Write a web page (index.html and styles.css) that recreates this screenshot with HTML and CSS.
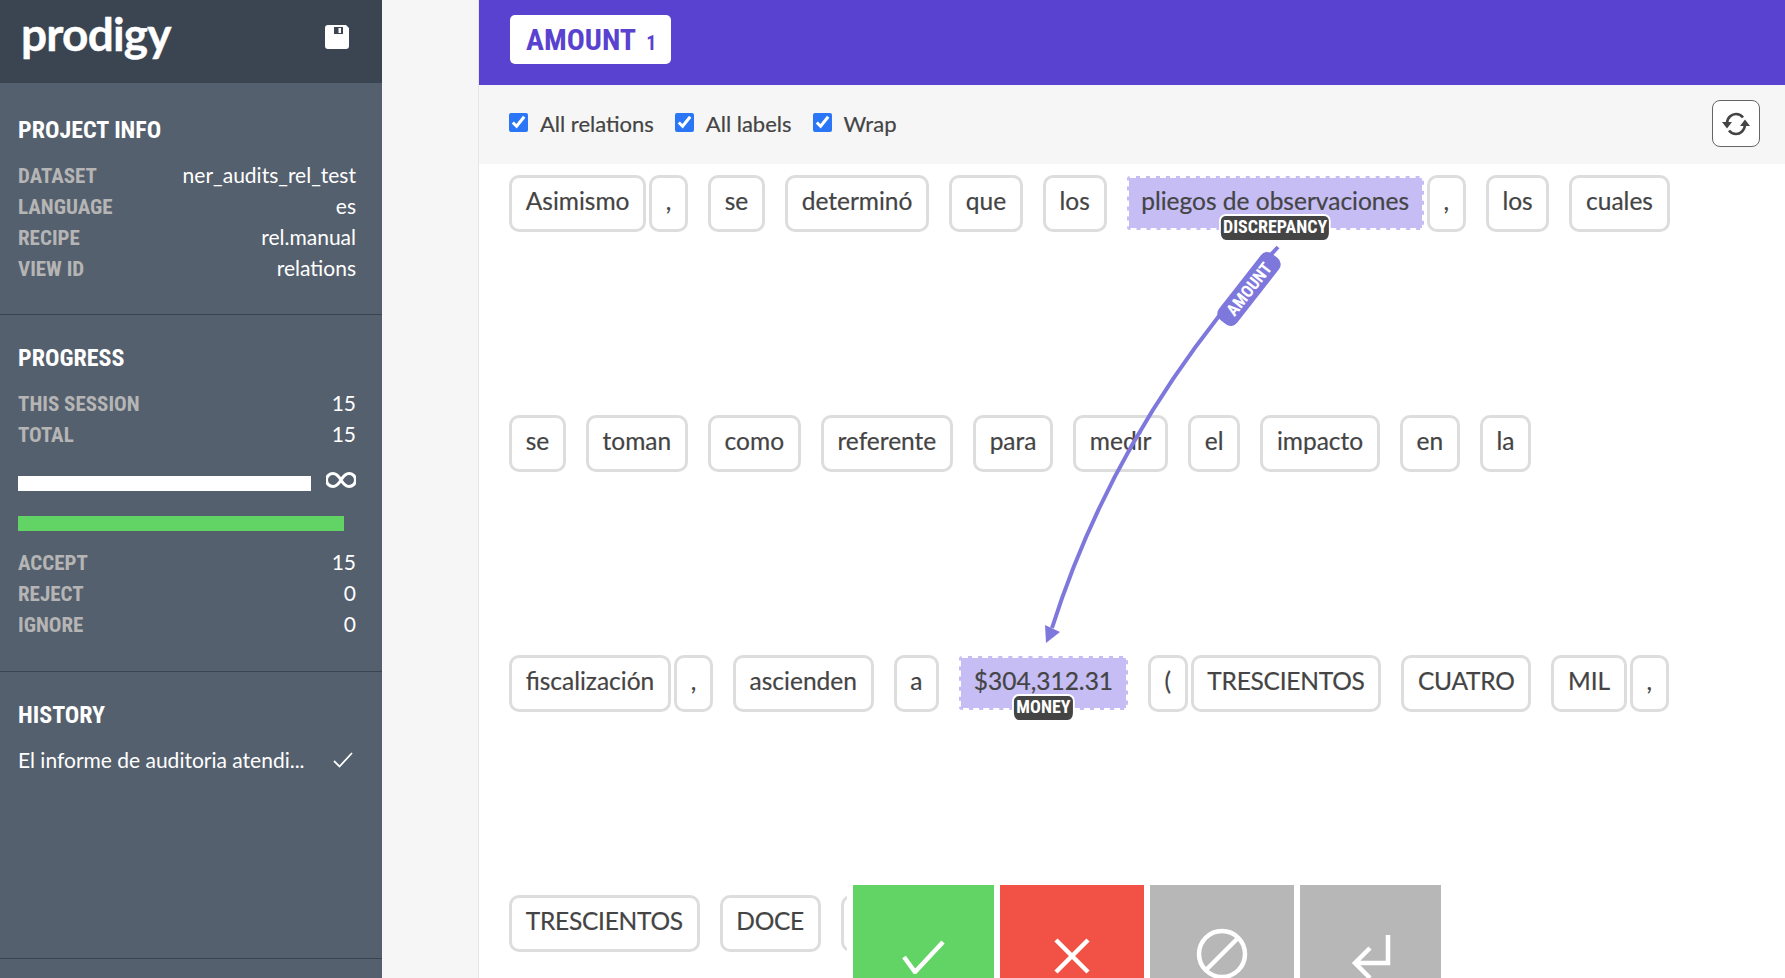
FILE: index.html
```html
<!DOCTYPE html>
<html lang="en">
<head>
  <meta charset="UTF-8" />
  <title>Prodigy</title>
  <link rel="stylesheet" href="styles.css">
</head>
<body>

<aside class="sidebar">
  <div class="brand">
    <span class="logo">prodigy</span>
    <svg class="save-icon" width="24" height="24" viewBox="0 0 24 24">
      <path fill="#fff" fill-rule="evenodd" d="M3 0H21L24 3V21a3 3 0 0 1-3 3H3a3 3 0 0 1-3-3V3a3 3 0 0 1 3-3ZM9 2V9H18V2Z"/>
      <rect x="13.500" y="3" width="2.500" height="5" fill="#fff"/>
    </svg>
  </div>

  <section class="panel panel-info">
    <h2>Project Info</h2>
    <div class="stat"><span>Dataset</span><b>ner_audits_rel_test</b></div>
    <div class="stat"><span>Language</span><b>es</b></div>
    <div class="stat"><span>Recipe</span><b>rel.manual</b></div>
    <div class="stat"><span>View ID</span><b>relations</b></div>
  </section>

  <section class="panel panel-progress">
    <h2>Progress</h2>
    <div class="stat"><span>This session</span><b>15</b></div>
    <div class="stat"><span>Total</span><b>15</b></div>
    <div class="progress-row">
      <div class="bar bar-white"></div>
      <svg width="30" height="16" viewBox="0 0 30 16">
        <path fill="none" stroke="#fff" stroke-width="3" d="M15 8C12 3 9.500 1.500 7 1.500a6.500 6.500 0 0 0 0 13C9.500 14.500 12 13 15 8C18 3 20.500 1.500 23 1.500a6.500 6.500 0 0 1 0 13C20.500 14.500 18 13 15 8Z"/>
      </svg>
    </div>
    <div class="bar bar-green"></div>
    <div class="stat"><span>Accept</span><b>15</b></div>
    <div class="stat"><span>Reject</span><b>0</b></div>
    <div class="stat"><span>Ignore</span><b>0</b></div>
  </section>

  <section class="panel panel-history">
    <h2>History</h2>
    <div class="history-item">
      <span>El informe de auditoria atendi...</span>
      <svg width="20" height="16" viewBox="0 0 20 16">
        <path fill="none" stroke="#fff" stroke-width="1.800" d="M1 9L6.500 14.500L19 1"/>
      </svg>
    </div>
  </section>
</aside>

<main class="content">
  <div class="title-bar">
    <div class="title-pill">AMOUNT <small>1</small></div>
  </div>

  <div class="toolbar">
    <label><input type="checkbox" checked> All relations</label>
    <label><input type="checkbox" checked> All labels</label>
    <label><input type="checkbox" checked> Wrap</label>
    <button class="refresh">
      <svg width="28" height="26" viewBox="0 0 28 26">
        <g fill="none" stroke="#444" stroke-width="2.600">
          <path d="M5 12C5.500 6 10 3 14 3C17 3 19.500 4.500 21 6.500"/>
          <path d="M23 14C22.500 20 18 23 14 23C11 23 8.500 21.500 7 19.500"/>
        </g>
        <path fill="#444" d="M0 11H10L5 17.500ZM18 15H28L23 8.500Z"/>
      </svg>
    </button>
  </div>

  <div class="tokens">
    <div class="row">
      <span class="token tight">Asimismo</span><span class="token">,</span>
      <span class="token">se</span>
      <span class="token">determinó</span>
      <span class="token">que</span>
      <span class="token">los</span>
      <span class="token mark tight">pliegos de observaciones<em>DISCREPANCY</em></span><span class="token">,</span>
      <span class="token">los</span>
      <span class="token">cuales</span>
    </div>
    <div class="row">
      <span class="token">se</span>
      <span class="token">toman</span>
      <span class="token">como</span>
      <span class="token">referente</span>
      <span class="token">para</span>
      <span class="token">medir</span>
      <span class="token">el</span>
      <span class="token">impacto</span>
      <span class="token">en</span>
      <span class="token">la</span>
    </div>
    <div class="row">
      <span class="token tight">fiscalización</span><span class="token">,</span>
      <span class="token">ascienden</span>
      <span class="token">a</span>
      <span class="token mark">$304,312.31<em>MONEY</em></span>
      <span class="token tight">(</span><span class="token caps">TRESCIENTOS</span>
      <span class="token caps">CUATRO</span>
      <span class="token tight">MIL</span><span class="token">,</span>
    </div>
    <div class="row">
      <span class="token caps">TRESCIENTOS</span>
      <span class="token caps">DOCE</span>
      <span class="token">PESOS</span>
    </div>
  </div>

  <div class="actions">
    <button class="action accept">
      <svg width="44" height="34" viewBox="0 0 44 34"><path d="M2 17L13 32L41 2"/></svg>
    </button>
    <button class="action reject">
      <svg width="36" height="36" viewBox="0 0 36 36"><path d="M2 2L34 34M34 2L2 34"/></svg>
    </button>
    <button class="action ignore">
      <svg width="52" height="52" viewBox="0 0 52 52"><circle cx="26" cy="26" r="23"/><path d="M9 43L43 9"/></svg>
    </button>
    <button class="action undo">
      <svg width="40" height="46" viewBox="0 0 40 46"><path d="M37 2V30H5M19 15L4 30L19 45"/></svg>
    </button>
  </div>
</main>

<!-- relation arrow, page coordinates -->
<svg class="relations" width="1785" height="978" viewBox="0 0 1785 978">
  <path fill="none" stroke="#7f78dc" stroke-width="4" d="M1278 247Q1118 420 1052 628"/>
  <path fill="#7f78dc" d="M1046 643L1045 625L1060 632Z"/>
  <g transform="translate(1249 289) rotate(-52)">
    <rect x="-42" y="-11.500" width="84" height="23" rx="8" fill="#7f78dc"/>
    <text class="relation-label" y="6" text-anchor="middle">AMOUNT</text>
  </g>
</svg>

</body>
</html>
```

FILE: styles.css
```css
html, body {
  height: 100%;
}
body {
  margin: 0;
  display: flex;
  overflow: hidden;
  position: relative;
  background: #f6f6f6;
  color: #444;
  font-family: Lato, sans-serif;
}

/* sidebar */
.sidebar {
  width: 382px;
  flex: none;
  background: #55606e;
  color: #fff;
}
.brand {
  height: 83px;
  background: #3a4551;
  display: flex;
  align-items: center;
  justify-content: space-between;
  padding: 0 33px 0 21px;
  box-sizing: border-box;
}
.logo {
  font-size: 46px;
  font-weight: 700;
  letter-spacing: -0.8px;
  -webkit-text-stroke: 0.4px #fff;
  line-height: 1;
  position: relative;
  top: -8px;
}
.save-icon {
  margin-bottom: 10px;
}
.panel {
  box-sizing: border-box;
  padding: 32px 26px 0 18px;
  border-bottom: 1px solid #3a4551;
}
.panel-info { height: 232px; }
.panel-progress { height: 357px; padding-top: 28px; }
.panel-history { height: 287px; padding-top: 28px; }
.panel h2 {
  margin: 0 0 15px;
  font-family: "Roboto Condensed", "Liberation Sans Narrow", Roboto, sans-serif;
  font-stretch: condensed;
  font-size: 24px;
  line-height: 30px;
  font-weight: 700;
  text-transform: uppercase;
}
.stat {
  display: flex;
  justify-content: space-between;
  height: 31px;
}
.stat span {
  font-family: "Roboto Condensed", "Liberation Sans Narrow", Roboto, sans-serif;
  font-stretch: condensed;
  font-size: 21px;
  font-weight: 700;
  line-height: 33px;
  color: #b5b5b5;
  text-transform: uppercase;
}
.stat b {
  font-size: 21px;
  font-weight: 400;
  line-height: 29px;
}
.progress-row {
  display: flex;
  justify-content: space-between;
  align-items: flex-start;
  margin-top: 22px;
}
.bar {
  height: 15px;
}
.bar-white {
  width: 293px;
  margin-top: 4px;
  background: #fff;
}
.bar-green {
  width: 326px;
  margin: 25px 0 16px;
  background: #62d365;
}
.history-item {
  display: flex;
  justify-content: space-between;
  align-items: center;
  font-size: 21px;
  line-height: 29px;
  padding-right: 3px;
}

/* main column */
.content {
  flex: 1;
  background: #fff;
  border-left: 1px solid #e6e6e6;
  position: relative;
  margin-left: 96px;
}
.title-bar {
  height: 85px;
  background: #5842cf;
  box-sizing: border-box;
  padding: 15px 0 0 31px;
}
.title-pill {
  display: inline-block;
  height: 49px;
  box-sizing: border-box;
  padding: 0 15px 0 16px;
  background: #fff;
  border-radius: 5px;
  color: #5842cf;
  font-family: "Roboto Condensed", "Liberation Sans Narrow", Roboto, sans-serif;
  font-stretch: condensed;
  font-size: 30px;
  font-weight: 700;
  line-height: 50px;
}
.title-pill small {
  font-size: 20px;
  margin-left: 4px;
}
.toolbar {
  height: 79px;
  box-sizing: border-box;
  padding: 0 25px 2px 30px;
  background: #f6f6f6;
  display: flex;
  align-items: center;
  font-size: 22px;
  -webkit-text-stroke: 0.2px #444;
}
.toolbar label {
  display: flex;
  align-items: center;
  margin-right: 21px;
}
.toolbar input {
  width: 19px;
  height: 19px;
  margin: 0 12px 2px 0;
  accent-color: #2a76f6;
}
.refresh {
  margin-left: auto;
  width: 48px;
  height: 47px;
  padding: 0;
  background: #fff;
  border: 1px solid #666;
  border-radius: 8px;
  display: flex;
  align-items: center;
  justify-content: center;
}

/* tokens */
.tokens {
  display: flex;
  flex-direction: column;
  gap: 183px;
  padding: 11px 0 0 30px;
}
.row {
  display: flex;
  height: 57px;
}
.token {
  position: relative;
  box-sizing: border-box;
  height: 57px;
  padding: 0 13.700px;
  margin-right: 20px;
  background: #fff;
  border: 3px solid #ddd;
  border-radius: 10px;
  font-size: 24.500px;
  line-height: 46px;
  white-space: nowrap;
  -webkit-text-stroke: 0.2px #444;
}
.caps {
  letter-spacing: -0.250px;
}
.tight {
  margin-right: 3px;
}
.mark {
  height: 54px;
  margin-top: 1px;
  background: #c5bdf4;
  border: 2px dashed #fff;
  border-radius: 3px;
  padding: 0 12.700px;
  line-height: 46px;
}
.mark.tight {
  margin-right: 3px;
}
.mark em {
  position: absolute;
  left: 50%;
  bottom: -12px;
  transform: translateX(-50%);
  padding: 0 2px 3px;
  background: #444;
  border: 2px solid #fff;
  border-bottom: 0;
  border-radius: 7px;
  color: #fff;
  font-family: "Roboto Condensed", "Liberation Sans Narrow", Roboto, sans-serif;
  font-stretch: condensed;
  font-size: 18px;
  font-style: normal;
  font-weight: 700;
  line-height: 21px;
  -webkit-text-stroke: 0;
  letter-spacing: 0;
}

/* accept / reject bar */
.actions {
  position: absolute;
  left: 368px;
  top: 885px;
  display: flex;
  gap: 6px;
  padding: 0 6px;
  background: #fff;
}
.action {
  height: 120px;
  padding: 0;
  border: 0;
  display: flex;
  justify-content: center;
}
.action svg {
  fill: none;
  stroke: #fff;
  stroke-width: 4.500;
}
.accept { width: 141px; background: #62d365; padding-top: 55px; }
.reject { width: 144px; background: #f25146; padding-top: 53px; }
.ignore { width: 144px; background: #b7b7b7; padding-top: 43px; }
.undo { width: 141px; background: #b7b7b7; padding-top: 48px; }

.relations {
  position: absolute;
  left: 0;
  top: 0;
  pointer-events: none;
}
.relation-label {
  fill: #fff;
  font-family: "Roboto Condensed", "Liberation Sans Narrow", Roboto, sans-serif;
  font-stretch: condensed;
  font-size: 17px;
  font-weight: 700;
}
```
